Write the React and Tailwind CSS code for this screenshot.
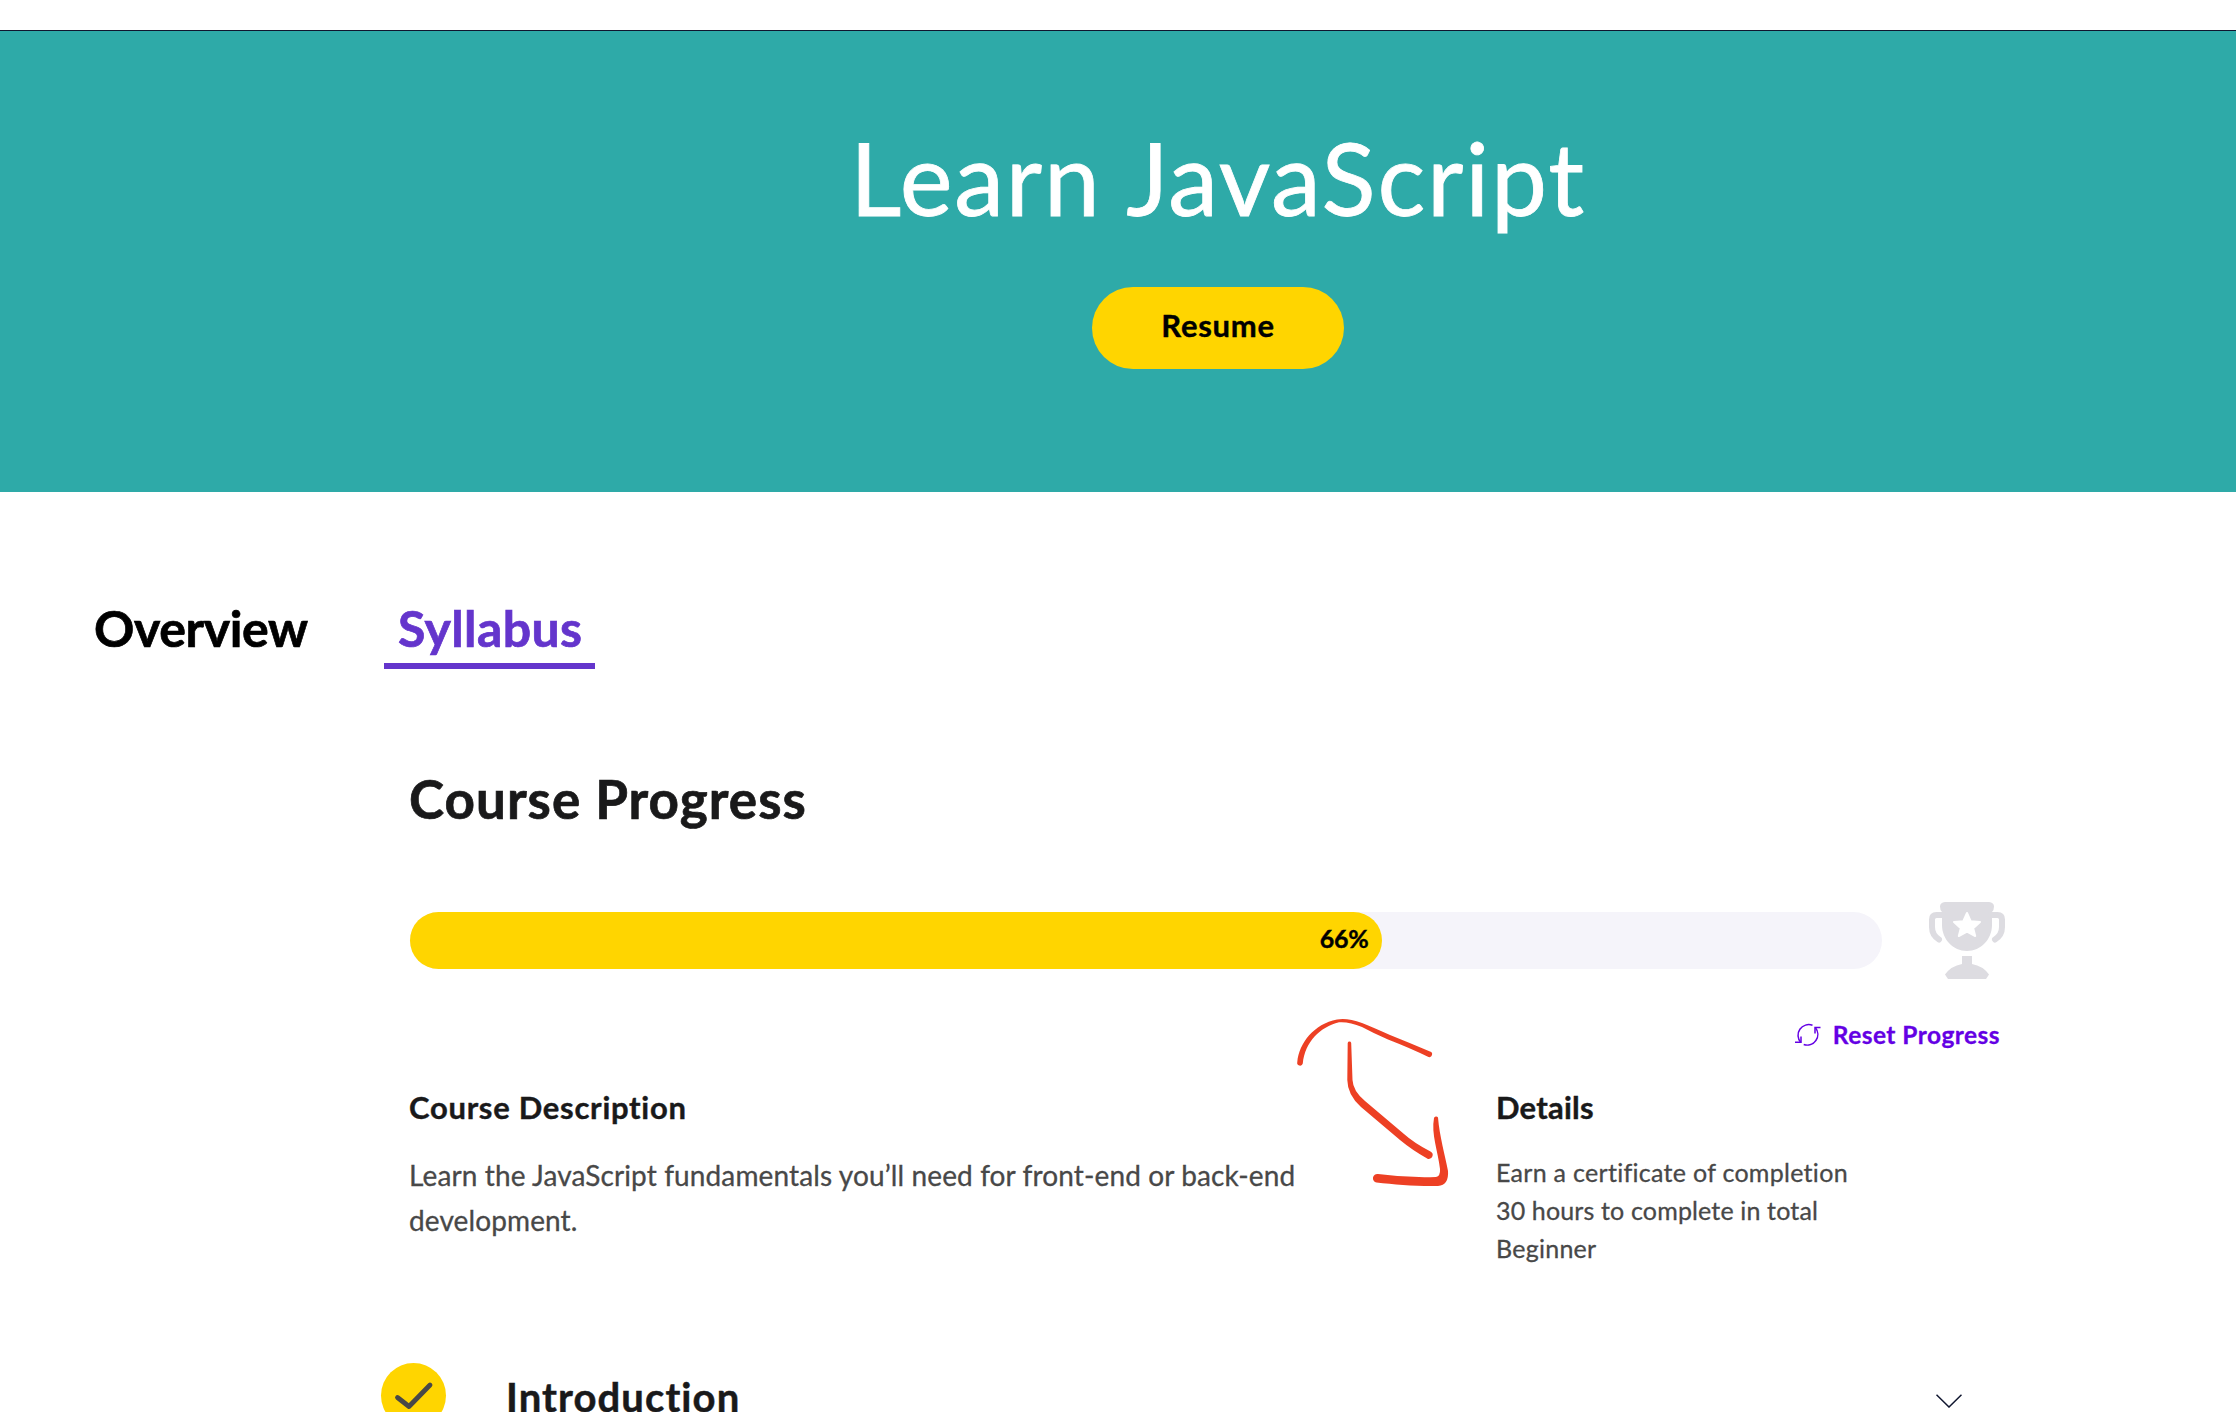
const PROGRESS = 66;

function Trophy() {
  return (
    <svg className="ml-[47px] h-[77px] w-[76px] shrink-0" viewBox="0 0 76 77" fill="#dddce1">
      <path d="M16 0H60Q65 .5 65 4.500Q65 8 63 10V23C63 37 52 49 38 49S13 37 13 23V10Q11 8 11 4.500Q11 .5 16 0Z" />
      <path
        d="M14 13H7.500Q3 13 3 17.500V25C3 31 6 35 10 37.500M62 13H68.500Q73 13 73 17.500V25C73 31 70 35 66 37.500"
        fill="none"
        stroke="#dddce1"
        strokeWidth="6"
        strokeLinecap="round"
      />
      <path d="M33 54H43V62Q54 64 60 72.500L57 77H19L16 72.500Q22 64 33 62Z" />
      <path
        d="M38 11L41.700 19.200L51 20L44.200 26.200L46.200 34L38 29.700L29.800 34L31.800 26.200L25 20L34.300 19.200Z"
        fill="#fff"
        stroke="#fff"
        strokeWidth="2"
        strokeLinejoin="round"
      />
    </svg>
  );
}

function ResetIcon() {
  return (
    <svg className="h-6 w-[26px]" viewBox="0 0 26 24" fill="none" stroke="#6400e4" strokeWidth="1.500">
      <path d="M17.500 2.300A10.700 10.700 0 0 0 5.800 19.500M8.700 21.500A10.700 10.700 0 0 0 20.500 4.700" />
      <path d="M0 19.300H6V13.500M25.500 4.500H20V10.500" />
    </svg>
  );
}

function Scribble() {
  return (
    <svg className="pointer-events-none absolute left-[1290px] top-[1010px] h-[190px] w-[170px]" viewBox="1290 1010 170 190" fill="#ed4024">
      <path d="M1297.300 1062C1299 1043 1314 1024 1337 1019.500Q1347 1017.500 1362 1023Q1371 1026.500 1390 1035Q1410 1043 1430 1051.500A2.700 2.700 0 0 1 1428.500 1057Q1410 1048 1388 1039.500Q1374 1033.500 1362 1027Q1349 1021.500 1339 1022.300C1320 1027 1305 1042 1302.800 1063.500A2.800 2.800 0 0 1 1297.300 1062Z" />
      <path d="M1347.700 1043A1.800 1.800 0 0 1 1351.200 1043L1352.500 1080Q1353 1091 1365 1101L1404 1134Q1414 1143 1430.500 1151.500A4 4 0 0 1 1428 1159Q1412 1150 1400 1140L1361 1107Q1347.500 1095 1347.300 1080Z" />
      <path d="M1434 1118A2.200 2.200 0 0 1 1438 1117.500C1439.500 1136 1445 1155 1448 1171Q1449 1185 1438 1186C1417 1186.500 1395 1184.500 1376.500 1182.500A4.300 4.300 0 0 1 1378 1174Q1407 1178 1436 1177Q1440.500 1176 1440 1169C1438 1151 1431 1134 1434 1118Z" />
    </svg>
  );
}

export default function App() {
  return (
    <div className="relative h-[1412px] w-[2236px] overflow-hidden bg-white font-['Lato',sans-serif] text-[#19191a]">
      <header className="mt-[30px] flex h-[462px] flex-col items-center border-t border-[#10162f] bg-[#2eaaa8] pl-[200px] pt-[86px]">
        <h1 className="text-[100px] leading-[120px] tracking-[1.82px] text-white [-webkit-text-stroke:0.8px]">Learn JavaScript</h1>
        <button className="mt-[50px] flex h-[82px] w-[252px] items-center justify-center rounded-full bg-[#ffd500] pb-[5px] text-[31px] font-bold tracking-[0.7px] text-black [-webkit-text-stroke:0.4px]">
          Resume
        </button>
      </header>

      <nav className="mt-[106px] flex h-[71px] pl-[94px] text-[50px] font-bold leading-[60px] [-webkit-text-stroke:0.7px]">
        <a className="w-[290px] tracking-[-0.4px] text-black">Overview</a>
        <a className="w-[211px] border-b-[6px] border-[#6435cc] pl-[14px] tracking-[0.38px] text-[#6435cc]">Syllabus</a>
      </nav>

      <main className="mt-[98px] pl-[410px]">
        <h2 className="-ml-px text-[53px] font-bold leading-[64px] tracking-[1.02px] [-webkit-text-stroke:0.7px]">Course Progress</h2>

        <div className="mt-[71px] flex items-center">
          <div className="h-[57px] w-[1472px] rounded-full bg-[#f5f4fa]">
            <div
              className="flex h-full items-center justify-end rounded-full bg-[#ffd500] pb-[3px] pr-[13px] text-[25px] font-bold tracking-[-0.25px] text-black [-webkit-text-stroke:0.4px]"
              style={{ width: `${PROGRESS}%` }}
            >
              {PROGRESS}%
            </div>
          </div>
          <Trophy />
        </div>

        <div className="mt-[41px] flex h-[30px] w-[1590px] items-center justify-end gap-[12px] text-[24.5px] font-bold leading-[30px] tracking-[0.45px] text-[#6400e4] [-webkit-text-stroke:0.3px]">
          <ResetIcon />
          Reset Progress
        </div>

        <div className="mt-[37px] flex">
          <section className="-ml-px w-[1087px]">
            <h3 className="text-[31px] font-bold leading-[40px] tracking-[0.72px] [-webkit-text-stroke:0.4px]">Course Description</h3>
            <p className="mt-[26px] w-[940px] text-[28px] leading-[45px] tracking-[0.12px] text-[#484848] [-webkit-text-stroke:0.3px]">
              Learn the JavaScript fundamentals you’ll need for front-end or back-end development.
            </p>
          </section>
          <section>
            <h3 className="text-[31px] font-bold leading-[40px] tracking-[0.23px] [-webkit-text-stroke:0.4px]">Details</h3>
            <ul className="mt-[26px] text-[25px] leading-[38px] text-[#484848] [-webkit-text-stroke:0.3px]">
              <li className="tracking-[0.29px]">Earn a certificate of completion</li>
              <li className="tracking-[0.15px]">30 hours to complete in total</li>
              <li className="tracking-[0.25px]">Beginner</li>
            </ul>
          </section>
        </div>

        <div className="-ml-[29px] mt-[96px] flex h-[65px] w-[1581px] items-center">
          <div className="size-[65px] rounded-full bg-[#ffd500]">
            <svg className="size-full" viewBox="0 0 65 65" fill="none" stroke="#484848" strokeWidth="4.800" strokeLinecap="round" strokeLinejoin="round">
              <path d="M16.500 34.500L28 43.500L49 22" />
            </svg>
          </div>
          <h3 className="ml-[60px] mt-[3px] text-[40px] font-bold leading-[48px] tracking-[1.1px] [-webkit-text-stroke:0.5px]">Introduction</h3>
          <svg className="ml-auto mt-[10px] h-[14px] w-[26px]" viewBox="0 0 26 14" fill="none" stroke="#10162f" strokeWidth="1.500">
            <path d="M.5 .7L13 13L25.500 .7" />
          </svg>
        </div>
      </main>
      <Scribble />
    </div>
  );
}
